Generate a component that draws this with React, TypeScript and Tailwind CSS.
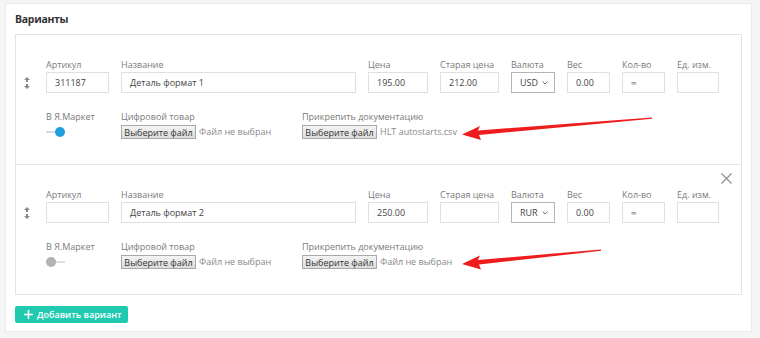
import React from "react";

type Variant = {
  sku: string;
  name: string;
  price: string;
  oldPrice: string;
  currency: string;
  weight: string;
  market: boolean;
  doc: string;
  removable: boolean;
};

const variants: Variant[] = [
  { sku: "311187", name: "Деталь формат 1", price: "195.00", oldPrice: "212.00", currency: "USD", weight: "0.00", market: true, doc: "HLT autostarts.csv", removable: false },
  { sku: "", name: "Деталь формат 2", price: "250.00", oldPrice: "", currency: "RUR", weight: "0.00", market: false, doc: "Файл не выбран", removable: true },
];

const Field = ({ label, width, children, select }: { label: string; width: string; children?: React.ReactNode; select?: boolean }) => (
  <div className="flex flex-col shrink-0">
    <span className="text-[9px] leading-[14px] text-[#7a7a7a] whitespace-nowrap">{label}</span>
    <div
      className={`${width} h-[21px] flex items-center px-[8px] text-[9px] text-[#444] bg-white border whitespace-nowrap ${select ? "border-[#b5b5b5]" : "border-[#e0e0e0]"}`}
    >
      {children}
    </div>
  </div>
);

const FilePicker = ({ label, file }: { label: string; file: string }) => (
  <div className="flex flex-col">
    <span className="text-[9px] leading-[14px] text-[#7a7a7a] mb-[1px] whitespace-nowrap">{label}</span>
    <div className="flex items-center gap-[3px] whitespace-nowrap">
      <span className="h-[14px] w-[75px] flex items-center justify-center border border-[#a9a9a9] bg-gradient-to-b from-[#f4f4f4] to-[#dcdcdc] text-[9px] leading-none text-[#333]">
        Выберите файл
      </span>
      <span className="text-[9px] text-[#888]">{file}</span>
    </div>
  </div>
);

const Toggle = ({ on }: { on: boolean }) => (
  <div className="relative w-[19px] h-[10px] mt-[3px]">
    <div className={`absolute left-0 right-0 top-[4px] h-[2px] ${on ? "bg-[#d5dde3]" : "bg-[#e0e0e0]"}`} />
    <div className={`absolute top-0 w-[10px] h-[10px] rounded-full ${on ? "right-0 bg-[#1e9fe0]" : "left-0 bg-[#b3b3b3]"}`} />
  </div>
);

const DragIcon = () => (
  <svg width="6" height="12" viewBox="0 0 6 12" className="text-[#8a8a8a]">
    <path d="M3 0 L6 3 H4 V5 H2 V3 H0 Z" fill="currentColor" />
    <path d="M3 12 L6 9 H4 V7 H2 V9 H0 Z" fill="currentColor" />
  </svg>
);

const VariantRow = ({ v, last }: { v: Variant; last: boolean }) => (
  <div className={`relative flex pt-[23px] ${last ? "pb-[25px]" : "pb-[25px] border-b border-[#e6e6e6]"}`}>
    {v.removable && (
      <svg className="absolute right-[9px] top-[8px]" width="11" height="11" viewBox="0 0 11 11">
        <path d="M0.5 0.5 L10.5 10.5 M10.5 0.5 L0.5 10.5" stroke="#8e8e8e" strokeWidth="1.2" />
      </svg>
    )}
    <div className="w-[30px] flex justify-center pt-[19px]">
      <div className="mr-[8px]">
        <DragIcon />
      </div>
    </div>
    <div className="flex flex-col">
      <div className="flex gap-[12px]">
        <Field label="Артикул" width="w-[63px]">{v.sku}</Field>
        <Field label="Название" width="w-[235px]">{v.name}</Field>
        <Field label="Цена" width="w-[60px]">{v.price}</Field>
        <Field label="Старая цена" width="w-[59px]">{v.oldPrice}</Field>
        <Field label="Валюта" width="w-[44px]" select>
          <span className="flex items-center gap-[4px]">
            {v.currency}
            <svg width="6" height="4" viewBox="0 0 6 4">
              <path d="M0.5 0.5 L3 3 L5.5 0.5" stroke="#666" strokeWidth="0.9" fill="none" />
            </svg>
          </span>
        </Field>
        <Field label="Вес" width="w-[43px]">{v.weight}</Field>
        <Field label="Кол-во" width="w-[43px]">
          <span className="text-[8px] text-[#666]">∞</span>
        </Field>
        <Field label="Ед. изм." width="w-[42px]" />
      </div>
      <div className="flex mt-[17px]">
        <div className="w-[75px] flex flex-col">
          <span className="text-[9px] leading-[14px] text-[#7a7a7a] whitespace-nowrap">В Я.Маркет</span>
          <Toggle on={v.market} />
        </div>
        <div className="w-[181px]">
          <FilePicker label="Цифровой товар" file="Файл не выбран" />
        </div>
        <FilePicker label="Прикрепить документацию" file={v.doc} />
      </div>
    </div>
  </div>
);

export default function App() {
  return (
    <div className="relative w-[760px] h-[338px] bg-[#f5f5f5] pt-[3px] pl-[5px] font-['Open_Sans',sans-serif] overflow-hidden">
      <div className="w-[747px] h-[329px] bg-white border border-[#ebebeb] px-[9px]">
        <h2 className="h-[30px] flex items-center pt-[1px] text-[10.5px] font-bold text-[#333] tracking-[-0.3px]">Варианты</h2>
        <div className="border border-[#e3e3e3]">
          {variants.map((v, i) => (
            <VariantRow key={i} v={v} last={i === variants.length - 1} />
          ))}
        </div>
        <button className="mt-[11px] h-[17px] w-[113px] flex items-center gap-[4px] pl-[9px] rounded-[2px] bg-[#1fcab1] text-white text-[9px] font-semibold whitespace-nowrap">
          <svg width="9" height="9" viewBox="0 0 9 9">
            <path d="M4.5 0 V9 M0 4.5 H9" stroke="white" strokeWidth="1.6" />
          </svg>
          Добавить вариант
        </button>
      </div>
      <svg className="absolute inset-0 pointer-events-none" width="760" height="338" viewBox="0 0 760 338">
        <path d="M652 117.5 L478 130.5 L480 126 L462 134.5 L481 140 L479 135 L652 118.8 Z" fill="#ee1c1c" />
        <path d="M601 249.5 L478 260 L480 255.5 L462 264 L481 269.5 L479 264.5 L601 250.8 Z" fill="#ee1c1c" />
      </svg>
    </div>
  );
}
